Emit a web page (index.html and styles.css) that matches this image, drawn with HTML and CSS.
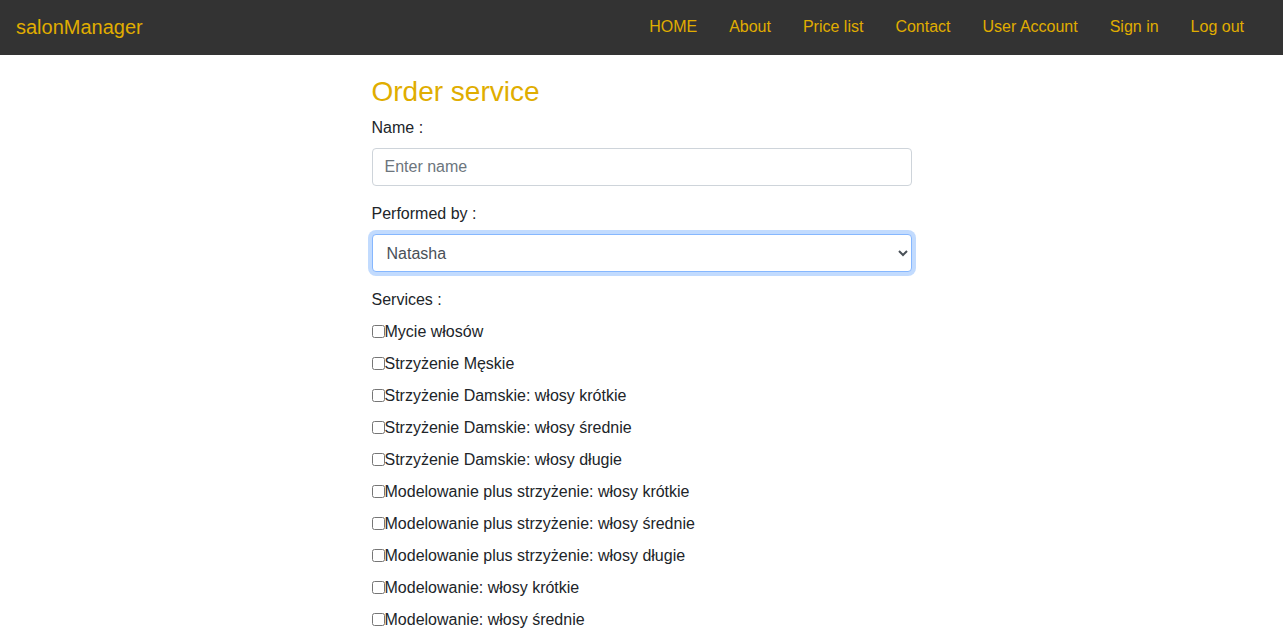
FILE: index.html
```html
<!DOCTYPE html>
<html lang="pl">
<head>
<meta charset="utf-8">
<title>salonManager</title>
<link rel="stylesheet" href="styles.css">
</head>
<body>
<nav class="navbar">
  <a class="brand" href="#">salonManager</a>
  <ul class="nav">
    <li><a href="#">HOME</a></li>
    <li><a href="#">About</a></li>
    <li><a href="#">Price list</a></li>
    <li><a href="#">Contact</a></li>
    <li><a href="#">User Account</a></li>
    <li><a href="#">Sign in</a></li>
    <li><a href="#">Log out</a></li>
  </ul>
</nav>
<main class="container">
  <h3 class="title">Order service</h3>
  <form>
    <div class="group">
      <label class="label" for="name">Name :</label>
      <input class="control" id="name" type="text" placeholder="Enter name">
    </div>
    <div class="group">
      <label class="label" for="worker">Performed by :</label>
      <select class="control select focused" id="worker">
        <option>Natasha</option>
      </select>
    </div>
    <div class="label">Services :</div>
    <div class="checks">
      <label class="check"><input type="checkbox">Mycie włosów</label>
      <label class="check"><input type="checkbox">Strzyżenie Męskie</label>
      <label class="check"><input type="checkbox">Strzyżenie Damskie: włosy krótkie</label>
      <label class="check"><input type="checkbox">Strzyżenie Damskie: włosy średnie</label>
      <label class="check"><input type="checkbox">Strzyżenie Damskie: włosy długie</label>
      <label class="check"><input type="checkbox">Modelowanie plus strzyżenie: włosy krótkie</label>
      <label class="check"><input type="checkbox">Modelowanie plus strzyżenie: włosy średnie</label>
      <label class="check"><input type="checkbox">Modelowanie plus strzyżenie: włosy długie</label>
      <label class="check"><input type="checkbox">Modelowanie: włosy krótkie</label>
      <label class="check"><input type="checkbox">Modelowanie: włosy średnie</label>
    </div>
  </form>
</main>
</body>
</html>
```

FILE: styles.css
```css
* { box-sizing: border-box; }
html, body { margin: 0; padding: 0; }
body {
  font-family: "Liberation Sans", Arial, sans-serif;
  font-size: 16px;
  line-height: 1.5;
  color: #212529;
  background: #fff;
}
a { text-decoration: none; }
.navbar {
  height: 55px;
  background: #333333;
  display: flex;
  align-items: center;
  justify-content: space-between;
  padding: 0 23px 1px 16px;
}
.brand {
  color: #e0ad00;
  font-size: 20px;
  line-height: 30px;
}
.nav {
  list-style: none;
  margin: 0;
  padding: 0;
  display: flex;
}
.nav a {
  display: block;
  color: #e0ad00;
  padding: 8px 16px;
  line-height: 24px;
}
.container {
  width: 540px;
  margin: 0 auto;
  padding-top: 20px;
}
.title {
  margin: 0 0 7px;
  font-size: 28px;
  font-weight: 400;
  line-height: 1.2;
  color: #e0ad00;
}
.group { margin-bottom: 16px; }
.label {
  display: block;
  margin-bottom: 8px;
  line-height: 24px;
}
.control {
  display: block;
  width: 100%;
  height: 38px;
  padding: 6px 12px;
  font-family: inherit;
  font-size: 16px;
  line-height: 24px;
  color: #212529;
  background: #fff;
  border: 1px solid #ced4da;
  border-radius: 4px;
  outline: none;
}
.control::placeholder { color: #6c757d; }
.select {
  padding: 7px 12px 5px 10px;
  color: #495057;
}
.focused {
  border-color: #86b7fe;
  box-shadow: 0 0 0 4px rgba(13, 110, 253, 0.25);
}
.checks {
  display: flex;
  flex-direction: column;
  gap: 8px;
  padding-bottom: 8px;
}
.check {
  display: flex;
  align-items: center;
  line-height: 24px;
}
.check input {
  margin: 0;
  width: 13px;
  height: 13px;
}
```
